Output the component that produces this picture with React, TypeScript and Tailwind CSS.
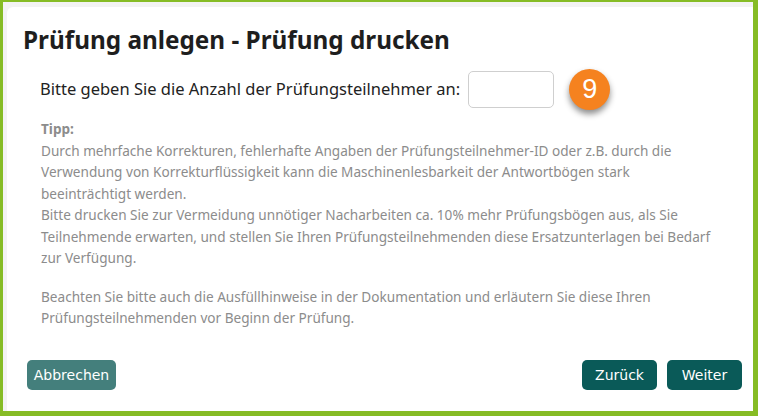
import React from "react";

export default function App() {
  return (
    <div className="w-[758px] h-[416px] border-solid border-[#86bc25] border-l-[3px] border-t-[2px] border-r-[5px] border-b-[5px] bg-[#f3f3f3] pt-[5px] pl-[4px]">
      <div className="h-full bg-white rounded-tl-[6px] flex flex-col" style={{ fontFamily: '"Noto Sans", sans-serif' }}>
        <h1 className="pl-[16px] pt-[16px] text-[24.3px] leading-[34px] font-bold text-[#1e1e1e]">
          Prüfung anlegen - Prüfung drucken
        </h1>
        <div className="flex items-center pl-[33px] mt-[12px]">
          <span className="text-[16.5px] text-[#222]">Bitte geben Sie die Anzahl der Prüfungsteilnehmer an:</span>
          <input className="ml-[8px] w-[86px] h-[37px] rounded-[5px] border border-[#cfcfcf] outline-none" />
          <div
            className="ml-[15px] w-[41px] h-[41px] rounded-full bg-[#f5821f] flex items-center justify-center text-white text-[27px] shadow-[0_4px_6px_rgba(0,0,0,0.45)]"
            style={{ fontFamily: '"Liberation Sans", Arial, sans-serif' }}
          >
            9
          </div>
        </div>
        <div className="pl-[34px] pr-[20px] mt-[8px] text-[13.6px] leading-[21.5px] text-[#8c8c8c]">
          <div className="font-bold">Tipp:</div>
          <div>
            Durch mehrfache Korrekturen, fehlerhafte Angaben der Prüfungsteilnehmer-ID oder z.B. durch die
            <br />
            Verwendung von Korrekturflüssigkeit kann die Maschinenlesbarkeit der Antwortbögen stark
            <br />
            beeinträchtigt werden.
          </div>
          <div>
            Bitte drucken Sie zur Vermeidung unnötiger Nacharbeiten ca. 10% mehr Prüfungsbögen aus, als Sie
            <br />
            Teilnehmende erwarten, und stellen Sie Ihren Prüfungsteilnehmenden diese Ersatzunterlagen bei Bedarf
            <br />
            zur Verfügung.
          </div>
          <div className="mt-[17px]">
            Beachten Sie bitte auch die Ausfüllhinweise in der Dokumentation und erläutern Sie diese Ihren
            <br />
            Prüfungsteilnehmenden vor Beginn der Prüfung.
          </div>
        </div>
        <div
          className="mt-auto mb-[21px] flex items-center pl-[20px] pr-[11px] text-[14px]"
          style={{ fontFamily: '"DejaVu Sans", Verdana, sans-serif' }}
        >
          <button className="h-[30px] w-[89px] rounded-[5px] bg-[#447f7c] text-white">Abbrechen</button>
          <button className="ml-auto h-[30px] w-[75px] rounded-[5px] bg-[#0a5a58] text-white">Zurück</button>
          <button className="ml-[10px] h-[30px] w-[75px] rounded-[5px] bg-[#0a5a58] text-white">Weiter</button>
        </div>
      </div>
    </div>
  );
}
